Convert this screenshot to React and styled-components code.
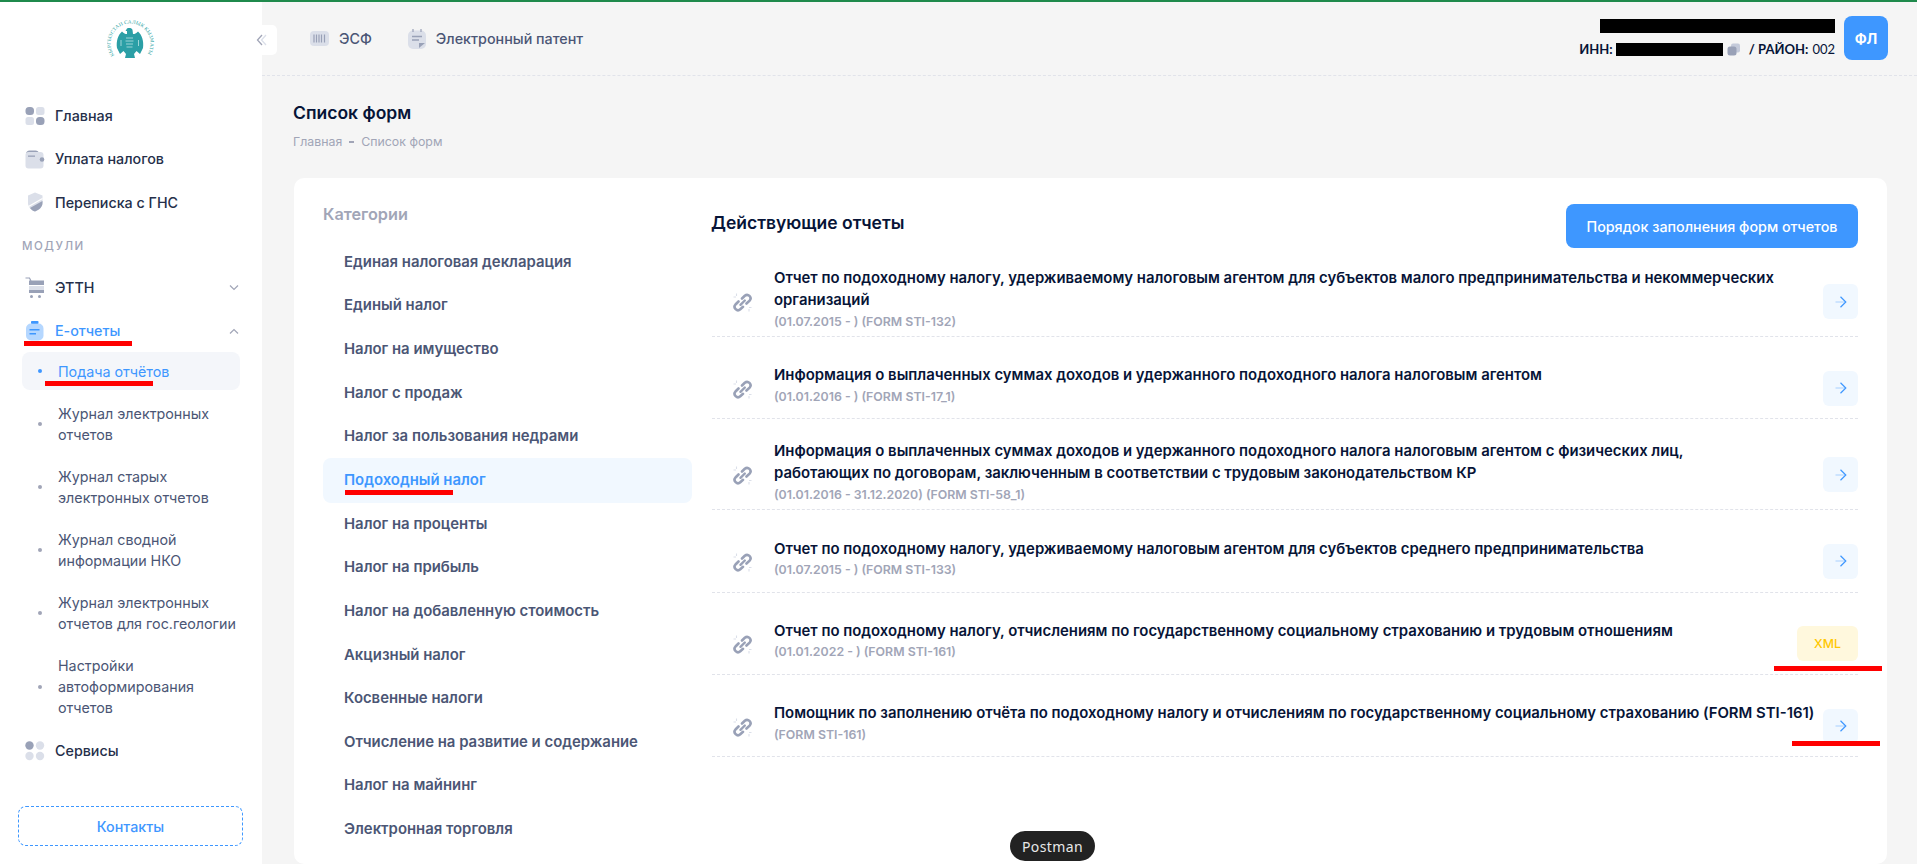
import React from 'react';
import styled, { createGlobalStyle } from 'styled-components';

const GlobalStyle = createGlobalStyle`
html, body {
    margin: 0;
    height: 100%;
    overflow: hidden;
    background: #f5f5f5;
    font-family: Inter, "Liberation Sans", sans-serif;
}
* { box-sizing: border-box; }
`;

const Page = styled.div`
position: relative;
display: flex;
height: 864px;
border-top: 2px solid #1f8a4c;
overflow: hidden;
`;

/* sidebar */
const Sidebar = styled.aside`
position: relative;
flex: 0 0 262px;
min-width: 0;
display: flex;
flex-direction: column;
background: #fff;
padding: 0 22px;
`;

const LogoBox = styled.div`
display: flex;
justify-content: center;
height: 92px;
padding-top: 18px;
`;

const CollapseBtn = styled.div`
position: absolute;
top: 23px;
left: 247px;
width: 30px;
height: 30px;
background: #fff;
border-radius: 5px;
display: flex;
align-items: center;
justify-content: center;
`;

const NavItem = styled.div`
position: relative;
display: flex;
align-items: center;
height: 43.3px;
flex: 0 0 43.3px;
padding-left: 3px;
font-size: 14.3px;
font-weight: 500;
color: ${props => props.$active ? '#3e97ff' : '#252f4a'};
`;

const NavIcon = styled.span`
display: flex;
width: 30px;
flex: 0 0 30px;
`;

const NavArrow = styled.span`
display: flex;
margin-left: auto;
margin-right: 1px;
`;

const SectionLabel = styled.div`
font-size: 11.5px;
font-weight: 500;
letter-spacing: 1.5px;
color: #a1a5b7;
height: 18px;
line-height: 18px;
margin: 13px 0 11px;
`;

const SubList = styled.div`
display: flex;
flex-direction: column;
`;

const SubItem = styled.div`
position: relative;
display: flex;
align-items: center;
width: 218px;
min-height: ${props => props.$active ? '38px' : '0'};
padding: ${props => props.$active ? '0' : '10.5px 0'};
margin-bottom: ${props => props.$active ? '2.4px' : '0'};
border-radius: 8px;
background: ${props => props.$active ? '#f4f6fa' : 'transparent'};
color: ${props => props.$active ? '#3e97ff' : '#4b5675'};
font-size: 14.3px;
line-height: 21px;
`;

const Bullet = styled.span`
flex: 0 0 36px;
display: flex;
justify-content: center;
&::before {
    content: '';
    width: 4px;
    height: 4px;
    border-radius: 50%;
    background: ${props => props.$active ? '#3e97ff' : '#a1a5b7'};
}
`;

const SubText = styled.span`
flex: 1;
`;

const ContactsBtn = styled.div`
margin: auto 0 18px -4px;
width: 225px;
height: 40px;
flex: 0 0 40px;
border: 1px dashed #3e97ff;
border-radius: 8px;
color: #3e97ff;
font-size: 14.3px;
font-weight: 500;
display: flex;
align-items: center;
justify-content: center;
`;

const Mark = styled.div`
position: absolute;
height: 5px;
background: #ff0000;
left: ${props => props.$left}px;
top: ${props => props.$top}px;
width: ${props => props.$width}px;
`;

/* main */
const Main = styled.main`
flex: 1;
display: flex;
flex-direction: column;
min-width: 0;
`;

const Header = styled.header`
display: flex;
align-items: center;
height: 74px;
flex: 0 0 74px;
padding: 0 29px 0 48px;
border-bottom: 1px dashed #e1e3ea;
`;

const HeaderLink = styled.div`
display: flex;
align-items: center;
gap: 10px;
margin-right: 36px;
font-size: 14.3px;
font-weight: 500;
color: #4b5675;
`;

const UserBlock = styled.div`
margin-left: auto;
display: flex;
align-items: center;
gap: 9px;
margin-top: -1px;
`;

const UserInfo = styled.div`
display: flex;
flex-direction: column;
align-items: flex-end;
gap: 8px;
`;

const Redacted = styled.div`
background: #000;
width: ${props => props.$width}px;
height: ${props => props.$height}px;
`;

const InnRow = styled.div`
display: flex;
align-items: center;
font-family: Lato, "Open Sans", sans-serif;
font-size: 13px;
color: #071437;
font-weight: 700;
`;

const CopyIcon = styled.span`
display: flex;
margin: 0 9px 0 4px;
`;

const Light = styled.span`
font-weight: 400;
margin-left: 4px;
`;

const Avatar = styled.div`
width: 44px;
height: 44px;
border-radius: 8px;
background: #3e97ff;
color: #fff;
font-size: 14.3px;
font-weight: 700;
display: flex;
align-items: center;
justify-content: center;
`;

const Content = styled.div`
padding: 0 30px 0 31px;
flex: 1;
display: flex;
flex-direction: column;
min-height: 0;
`;

const PageTitle = styled.h1`
margin: 26px 0 0;
font-size: 17.5px;
line-height: 22px;
font-weight: 600;
color: #071437;
`;

const Breadcrumb = styled.div`
display: flex;
align-items: center;
gap: 7px;
margin-top: 10px;
margin-bottom: 28px;
font-size: 12.35px;
line-height: 16px;
color: #a1a5b7;
`;

const Dash = styled.span`
width: 5px;
height: 2px;
background: #a1a5b7;
`;

const Card = styled.section`
flex: 1;
display: flex;
margin-left: 1px;
background: #fff;
border-radius: 10px;
padding: 26px 29px 0 29px;
min-height: 0;
`;

const Categories = styled.div`
flex: 0 0 369px;
margin-right: 20px;
`;

const CategoriesTitle = styled.div`
font-size: 16.25px;
line-height: 20px;
font-weight: 600;
color: #a1a5b7;
margin-bottom: 16px;
`;

const CategoryItem = styled.div`
position: relative;
display: flex;
align-items: center;
height: ${props => props.$active ? '45px' : '43.65px'};
margin: ${props => props.$active ? '-0.7px 0' : '0'};
padding-left: 21px;
border-radius: 8px;
font-size: 14.9px;
font-weight: 600;
background: ${props => props.$active ? '#f1f8ff' : 'transparent'};
color: ${props => props.$active ? '#3e97ff' : '#4b5675'};
`;

const Reports = styled.div`
flex: 1;
min-width: 0;
`;

const ReportsHead = styled.div`
display: flex;
align-items: center;
justify-content: space-between;
height: 44px;
margin-bottom: -2px;
`;

const ReportsTitle = styled.h2`
margin: 0 0 7px -1px;
font-size: 17.5px;
font-weight: 600;
color: #071437;
`;

const PrimaryBtn = styled.div`
width: 292px;
height: 44px;
border-radius: 8px;
background: #3e97ff;
color: #fff;
font-size: 14.3px;
font-weight: 500;
display: flex;
align-items: center;
justify-content: center;
`;

const ReportRow = styled.div`
position: relative;
display: flex;
align-items: center;
height: ${props => props.$tall ? '91px' : '82.3px'};
padding: 20px 0 4px;
border-bottom: 1px dashed #e1e3ea;
`;

const LinkIcon = styled.span`
display: flex;
flex: 0 0 62px;
padding-left: 20px;
margin-top: 7px;
`;

const ReportBody = styled.div`
flex: 1;
min-width: 0;
padding-right: 4px;
`;

const ReportTitle = styled.div`
font-size: 14.9px;
line-height: 22.5px;
font-weight: 600;
color: #071437;
`;

const ReportMeta = styled.div`
font-size: 12.35px;
line-height: 20px;
font-weight: 600;
color: #a1a5b7;
`;

const ArrowBtn = styled.div`
flex: 0 0 auto;
width: ${props => props.$xml ? '61px' : '35px'};
height: 35px;
margin-top: 5px;
border-radius: 6px;
background: ${props => props.$xml ? '#fff8dd' : '#f1f8ff'};
color: #ffc700;
font-size: 12.35px;
font-weight: 500;
display: flex;
align-items: center;
justify-content: center;
`;

const Toast = styled.div`
position: absolute;
left: 1010px;
top: 829px;
width: 85px;
height: 30px;
border-radius: 15px;
background: #222;
color: #e8e8e8;
font-family: "Noto Sans", "DejaVu Sans", sans-serif;
font-size: 14px;
letter-spacing: 0.4px;
display: flex;
align-items: center;
justify-content: center;
`;

/* icons, all two-tone grey like the original */
const Logo = () => (
    <svg width="48" height="42" viewBox="0 0 48 42">
        <defs>
            <path id="logoRing" d="M7.4 35.4 A20 20 0 1 1 39.6 35.4" fill="none" />
        </defs>
        <text fontSize="5" fontFamily="Liberation Serif, serif" fill="#2aa3a3">
            <textPath href="#logoRing" textLength="86" lengthAdjust="spacingAndGlyphs">КЫРГЫЗСТАН САЛЫК КЫЗМАТЫ</textPath>
        </text>
        <path fill="#2b9fa6" d="M20 8.500 C22 7.500 25 8 25.500 10 L26 14 C28 14 29 13.500 31 11.500 C35 15 37 21 36 28 L33 34 L29.500 31 L27 34 L28 38 H18 L19 34 L16.500 31 L13 34 L10 28 C9 21 11 15 15 11.500 C17 13.500 18 14 20 14 L20 11 L18.500 11 Z" />
        <path d="M19 18h7M18.500 21h8M19 24h7M19.500 27h6M14 20v6M31.500 20v6" stroke="#cdeced" strokeWidth="0.700" fill="none" />
    </svg>
);

const GridIcon = () => (
    <svg width="20" height="20" viewBox="0 0 20 20">
        <rect x="0.500" y="1" width="8.500" height="8" rx="3.500" fill="#99a1b7" />
        <rect x="11" y="1" width="8.500" height="8" rx="2.500" fill="#dbdfe9" />
        <rect x="0.500" y="11" width="8.500" height="8" rx="2.500" fill="#dbdfe9" />
        <rect x="11" y="11" width="8.500" height="8" rx="3.500" fill="#99a1b7" />
    </svg>
);

const WalletIcon = () => (
    <svg width="20" height="20" viewBox="0 0 20 20">
        <path d="M1 5c0-2 1.500-3.500 3.500-3.500h6c2 0 3 1 3.500 2.500H1z" fill="#99a1b7" />
        <rect x="0.500" y="3" width="18" height="16.500" rx="3" fill="#dbdfe9" />
        <rect x="3" y="6.500" width="7" height="1.300" fill="#99a1b7" />
        <circle cx="17" cy="10.500" r="2.300" fill="#99a1b7" />
    </svg>
);

const ShieldIcon = () => (
    <svg width="20" height="20" viewBox="0 0 20 20">
        <path d="M10 0.500 L17.500 3.500 V11 C17.500 15 14 18 10 19.500 C6 18 3 15 3 11 V3.500 Z" fill="#dbdfe9" />
        <path d="M17.500 9 V11 C17.500 15 14 18 10 19.500 C8 19 6 17.500 5 16 Z" fill="#99a1b7" />
        <path d="M17.500 6.500 L3.500 14.500" stroke="#fff" strokeWidth="1.200" />
    </svg>
);

const CartIcon = () => (
    <svg width="20" height="22" viewBox="0 0 20 22">
        <path d="M0.500 1h4l1.500 3" stroke="#99a1b7" strokeWidth="1.200" fill="none" />
        <rect x="4" y="3.500" width="15" height="4.500" fill="#99a1b7" />
        <rect x="4" y="9" width="15" height="4" fill="#dbdfe9" />
        <rect x="4" y="13" width="15" height="3" fill="#99a1b7" />
        <circle cx="6.500" cy="19.500" r="1.500" fill="#99a1b7" />
        <circle cx="14.500" cy="19.500" r="1.500" fill="#99a1b7" />
    </svg>
);

const ClipboardIcon = () => (
    <svg width="20" height="20" viewBox="0 0 20 20">
        <rect x="1" y="2.500" width="17.500" height="17" rx="5" fill="#b5d7ff" />
        <rect x="6" y="0" width="7.500" height="2.800" rx="0.800" fill="#3e97ff" />
        <rect x="4.500" y="8" width="10" height="1.500" fill="#3e97ff" />
        <rect x="4.500" y="12" width="6.500" height="1.500" fill="#3e97ff" />
    </svg>
);

const DotsIcon = () => (
    <svg width="20" height="20" viewBox="0 0 20 20">
        <circle cx="4.500" cy="4.500" r="4.200" fill="#99a1b7" />
        <circle cx="15" cy="4.500" r="4.200" fill="#dbdfe9" />
        <circle cx="4.500" cy="15" r="4.200" fill="#dbdfe9" />
        <circle cx="15" cy="15" r="4.200" fill="#dbdfe9" />
    </svg>
);

const Chevron = ({ up }) => (
    <svg width="10" height="6" viewBox="0 0 10 6" fill="none" stroke="#a1a5b7" strokeWidth="1.200">
        <path d={up ? 'M1 5.500 L5 1.500 L9 5.500' : 'M1 0.500 L5 4.500 L9 0.500'} />
    </svg>
);

const DoubleLeft = () => (
    <svg width="12" height="12" viewBox="0 0 12 12" fill="none" strokeWidth="1.300">
        <path d="M6 1 L1.500 6 L6 11" stroke="#a1a5b7" />
        <path d="M10 1 L5.500 6 L10 11" stroke="#dbdfe9" />
    </svg>
);

const BarcodeIcon = () => (
    <svg width="19" height="15" viewBox="0 0 19 15">
        <rect width="19" height="15" rx="4" fill="#dbdfe9" />
        <path d="M4 3.500v8M6.500 3.500v8M9 3.500v8M11.500 3.500v8M14.500 3.500v8" stroke="#99a1b7" strokeWidth="1.200" />
    </svg>
);

const NoteIcon = () => (
    <svg width="18" height="20" viewBox="0 0 18 20">
        <rect y="1.500" width="18" height="18.500" rx="5" fill="#dbdfe9" />
        <path d="M5 0v3M13 0v3" stroke="#99a1b7" strokeWidth="1.200" />
        <path d="M4 7.500h10M4 11h7" stroke="#99a1b7" strokeWidth="1.300" />
        <path d="M11 19 v-5 h6 z" fill="#99a1b7" />
    </svg>
);

const Copy = () => (
    <svg width="13" height="13" viewBox="0 0 13 13">
        <rect x="4" y="0.500" width="9" height="9" rx="2" fill="#c4cada" />
        <rect x="0.500" y="3.500" width="9" height="9" rx="2.500" fill="#99a1b7" />
    </svg>
);

const ChainIcon = () => (
    <svg width="21" height="21" viewBox="0 0 21 21" fill="none">
        <path d="M6.500 9.500 L3.500 12.500 a3.400 3.400 0 0 0 4.800 4.800 L11 14.800" stroke="#99a1b7" strokeWidth="2.600" strokeLinecap="round" />
        <path d="M10 6.500 L12.800 3.800 a3.400 3.400 0 0 1 4.800 4.800 L14.500 11.500" stroke="#99a1b7" strokeWidth="2.600" strokeLinecap="round" />
        <path d="M8.500 12.800 L12.800 8.500" stroke="#99a1b7" strokeWidth="2.400" strokeLinecap="round" />
        <path d="M4.500 1.500v2.500M1.500 5h2.500M17 19.500V17M19.500 15.500H17" stroke="#dbdfe9" strokeWidth="1.100" />
    </svg>
);

const ArrowIcon = () => (
    <svg width="12" height="12" viewBox="0 0 12 12" fill="none" strokeWidth="1.200">
        <path d="M0.500 6 H10.500" stroke="#b5d7ff" />
        <path d="M5.500 0.800 L10.800 6 L5.500 11.200" stroke="#3e97ff" />
    </svg>
);

const categories = [
    'Единая налоговая декларация',
    'Единый налог',
    'Налог на имущество',
    'Налог с продаж',
    'Налог за пользования недрами',
    'Подоходный налог',
    'Налог на проценты',
    'Налог на прибыль',
    'Налог на добавленную стоимость',
    'Акцизный налог',
    'Косвенные налоги',
    'Отчисление на развитие и содержание',
    'Налог на майнинг',
    'Электронная торговля',
];

const subItems = [
    ['Журнал электронных', 'отчетов'],
    ['Журнал старых', 'электронных отчетов'],
    ['Журнал сводной', 'информации НКО'],
    ['Журнал электронных', 'отчетов для гос.геологии'],
    ['Настройки', 'автоформирования', 'отчетов'],
];

const reports = [
    {
        title: ['Отчет по подоходному налогу, удерживаемому налоговым агентом для субъектов малого предпринимательства и некоммерческих', 'организаций'],
        meta: '(01.07.2015 - ) (FORM STI-132)',
        tall: true,
    },
    {
        title: ['Информация о выплаченных суммах доходов и удержанного подоходного налога налоговым агентом'],
        meta: '(01.01.2016 - ) (FORM STI-17_1)',
    },
    {
        title: ['Информация о выплаченных суммах доходов и удержанного подоходного налога налоговым агентом с физических лиц,', 'работающих по договорам, заключенным в соответствии с трудовым законодательством КР'],
        meta: '(01.01.2016 - 31.12.2020) (FORM STI-58_1)',
        tall: true,
    },
    {
        title: ['Отчет по подоходному налогу, удерживаемому налоговым агентом для субъектов среднего предпринимательства'],
        meta: '(01.07.2015 - ) (FORM STI-133)',
    },
    {
        title: ['Отчет по подоходному налогу, отчислениям по государственному социальному страхованию и трудовым отношениям'],
        meta: '(01.01.2022 - ) (FORM STI-161)',
        xml: true,
    },
    {
        title: ['Помощник по заполнению отчёта по подоходному налогу и отчислениям по государственному социальному страхованию (FORM STI-161)'],
        meta: '(FORM STI-161)',
        marked: true,
    },
];

const App = () => (
    <>
        <GlobalStyle />
        <Page>
            <Sidebar>
                <LogoBox><Logo /></LogoBox>
                <NavItem><NavIcon><GridIcon /></NavIcon>Главная</NavItem>
                <NavItem><NavIcon><WalletIcon /></NavIcon>Уплата налогов</NavItem>
                <NavItem><NavIcon><ShieldIcon /></NavIcon>Переписка с ГНС</NavItem>
                <SectionLabel>МОДУЛИ</SectionLabel>
                <NavItem><NavIcon><CartIcon /></NavIcon>ЭТТН<NavArrow><Chevron /></NavArrow></NavItem>
                <NavItem $active>
                    <NavIcon><ClipboardIcon /></NavIcon>Е-отчеты<NavArrow><Chevron up /></NavArrow>
                    <Mark $left={2} $top={31.7} $width={108} />
                </NavItem>
                <SubList>
                    <SubItem $active>
                        <Bullet $active />
                        <SubText>Подача отчётов</SubText>
                        <Mark $left={23} $top={28.4} $width={108} />
                    </SubItem>
                    {subItems.map(lines => (
                        <SubItem key={lines.join()}>
                            <Bullet />
                            <SubText>{lines.map((l, i) => <div key={i}>{l}</div>)}</SubText>
                        </SubItem>
                    ))}
                </SubList>
                <NavItem><NavIcon><DotsIcon /></NavIcon>Сервисы</NavItem>
                <ContactsBtn>Контакты</ContactsBtn>
                <CollapseBtn><DoubleLeft /></CollapseBtn>
            </Sidebar>
            <Main>
                <Header>
                    <HeaderLink><BarcodeIcon />ЭСФ</HeaderLink>
                    <HeaderLink><NoteIcon />Электронный патент</HeaderLink>
                    <UserBlock>
                        <UserInfo>
                            <Redacted $width={235} $height={14} />
                            <InnRow>
                                ИНН:&nbsp;
                                <Redacted $width={107} $height={13} />
                                <CopyIcon><Copy /></CopyIcon>
                                / РАЙОН:<Light>002</Light>
                            </InnRow>
                        </UserInfo>
                        <Avatar>ФЛ</Avatar>
                    </UserBlock>
                </Header>
                <Content>
                    <PageTitle>Список форм</PageTitle>
                    <Breadcrumb>Главная<Dash />Список форм</Breadcrumb>
                    <Card>
                        <Categories>
                            <CategoriesTitle>Категории</CategoriesTitle>
                            {categories.map(c => (
                                <CategoryItem key={c} $active={c === 'Подоходный налог'}>
                                    {c}
                                    {c === 'Подоходный налог' && <Mark $left={22} $top={32} $width={108} />}
                                </CategoryItem>
                            ))}
                        </Categories>
                        <Reports>
                            <ReportsHead>
                                <ReportsTitle>Действующие отчеты</ReportsTitle>
                                <PrimaryBtn>Порядок заполнения форм отчетов</PrimaryBtn>
                            </ReportsHead>
                            {reports.map(r => (
                                <ReportRow key={r.meta} $tall={r.tall}>
                                    <LinkIcon><ChainIcon /></LinkIcon>
                                    <ReportBody>
                                        <ReportTitle>
                                            {r.title.map((t, i) => <div key={i}>{t}</div>)}
                                        </ReportTitle>
                                        <ReportMeta>{r.meta}</ReportMeta>
                                    </ReportBody>
                                    {r.xml
                                        ? <ArrowBtn $xml>XML</ArrowBtn>
                                        : <ArrowBtn><ArrowIcon /></ArrowBtn>}
                                    {r.xml && <Mark $left={1062} $top={73} $width={108} />}
                                    {r.marked && <Mark $left={1080} $top={66} $width={88} />}
                                </ReportRow>
                            ))}
                        </Reports>
                    </Card>
                </Content>
            </Main>
            <Toast>Postman</Toast>
        </Page>
    </>
);

export default App;
